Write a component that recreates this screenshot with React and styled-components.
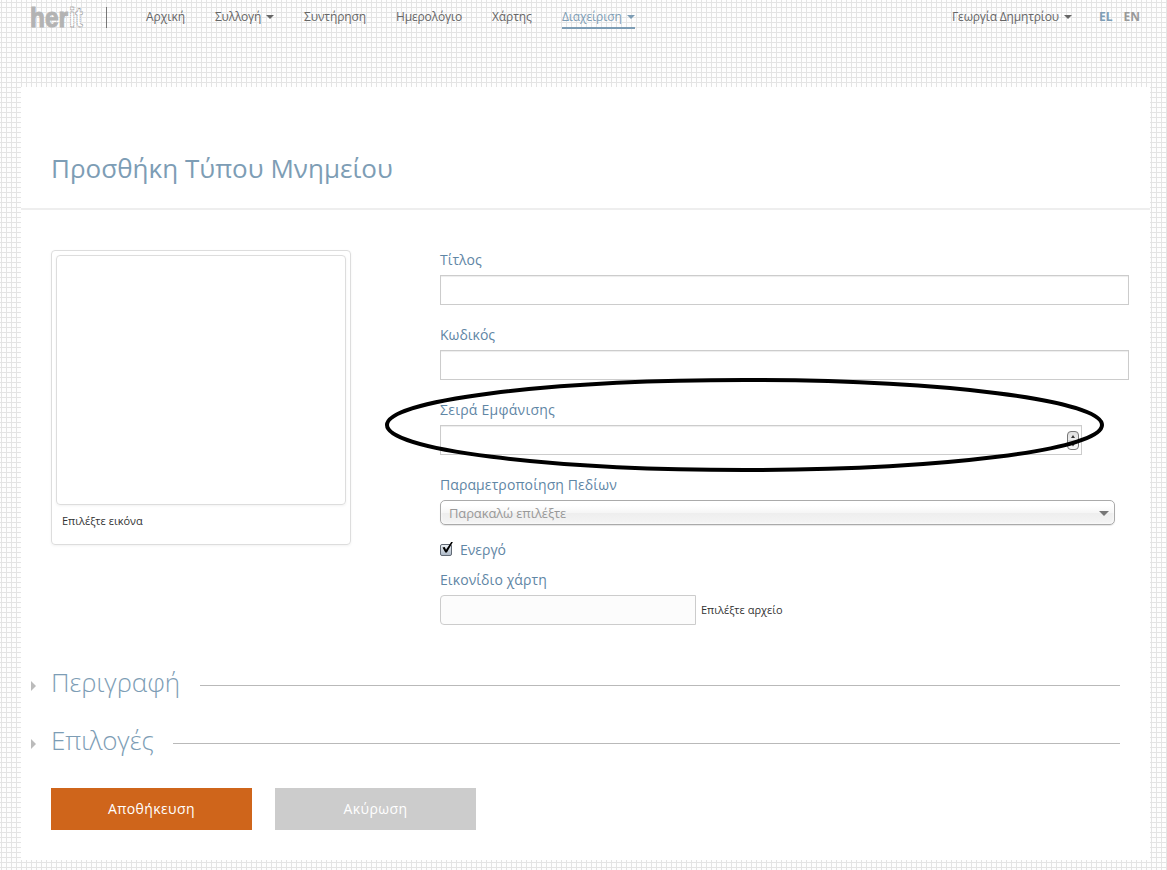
import React from 'react';
import styled, { createGlobalStyle } from 'styled-components';

const GlobalStyle = createGlobalStyle`
  * { box-sizing: border-box; }
  body {
    margin: 0;
    color: #333;
    font-family: "Open Sans", "Noto Sans", sans-serif;
    font-size: 14px;
    line-height: 20px;
    background-color: #fefefe;
    background-image:
      linear-gradient(to right, transparent 1px, #e4e4e4 1px, #e4e4e4 2px, transparent 2px),
      linear-gradient(to bottom, transparent 2px, #e4e4e4 2px, #e4e4e4 3px, transparent 3px);
    background-size: 5px 5px;
  }
`;

const Page = styled.div`
  position: relative;
  width: 1167px;
  height: 870px;
  overflow: hidden;
`;

const Header = styled.header`
  display: flex;
  align-items: flex-start;
  height: 87px;
  padding: 7px 27px 0 30px;
  font-size: 12px;
  color: #666;
`;

const Brand = styled.div`
  width: 77px;
  height: 21px;
  border-right: 1px solid #777;
`;

const LogoDrawing = styled.svg`
  display: block;
  margin-top: -7px;
`;

const Nav = styled.nav`
  display: flex;
  flex: 1;
  gap: 30px;
  padding-left: 39px;
`;

const NavItem = styled.a`
  display: flex;
  align-items: center;
  justify-content: space-between;
  width: ${(p) => p.$width}px;
  height: 22px;
  white-space: nowrap;
  color: ${(p) => (p.$active ? '#7d9db5' : '#666')};
  border-bottom: 2px solid ${(p) => (p.$active ? '#7d9db5' : 'transparent')};
  letter-spacing: ${(p) => p.$track || 0}px;
`;

const Caret = styled.i`
  border: 4px solid transparent;
  border-top-color: currentColor;
  border-bottom: 0;
`;

const Languages = styled.div`
  display: flex;
  gap: 11px;
  margin-left: 27px;
  font-weight: 700;
`;

const Language = styled.a`
  color: ${(p) => (p.$active ? '#7d9db5' : '#999')};
`;

const Panel = styled.main`
  width: 1129px;
  height: 773px;
  margin-left: 21px;
  background: #fff;
`;

const TitleBar = styled.div`
  height: 123px;
  padding: 61px 30px 0;
  border-bottom: 2px solid #eee;
`;

const Title = styled.h1`
  margin: 0;
  font-size: 26px;
  font-weight: 400;
  line-height: 40px;
  letter-spacing: 0.02px;
  color: #7d9db5;
`;

const FormRow = styled.div`
  display: flex;
  gap: 89px;
  height: 443px;
  padding: 40px 21px 0 30px;
`;

const ImageCard = styled.div`
  width: 300px;
  height: 295px;
  padding: 4px;
  border: 1px solid #ddd;
  border-radius: 4px;
  box-shadow: 0 1px 3px rgba(0, 0, 0, 0.055);
`;

const ImagePreview = styled.div`
  height: 250px;
  border: 1px solid #ddd;
  border-radius: 4px;
  box-shadow: 0 1px 3px rgba(0, 0, 0, 0.055);
`;

const FileAction = styled.span`
  display: block;
  padding: ${(p) => p.$pad};
  font-size: 11px;
  color: #333;
`;

const Fields = styled.div`
  flex: 1;
`;

const Field = styled.div`
  margin-bottom: ${(p) => p.$gap ?? 20}px;
`;

const Label = styled.label`
  display: block;
  margin-bottom: 5px;
  color: #5f86a5;
  letter-spacing: ${(p) => p.$track || 0}px;
`;

const TextBox = styled.div`
  display: flex;
  align-items: center;
  justify-content: flex-end;
  width: ${(p) => p.$width || 689}px;
  height: 30px;
  padding: 1px 2px 0 0;
  border: 1px solid #ccc;
  box-shadow: inset 0 1px 1px rgba(0, 0, 0, 0.075);
`;

const Select = styled.div`
  display: flex;
  align-items: center;
  justify-content: space-between;
  width: 675px;
  height: 25px;
  padding: 0 5px 0 8px;
  border: 1px solid #aaa;
  border-radius: 5px;
  background: linear-gradient(#fff 20%, #f6f6f6 50%, #eee 52%, #f4f4f4 100%);
  box-shadow: inset 0 0 3px #fff, 0 1px 1px rgba(0, 0, 0, 0.1);
  color: #999;
  font-size: 13px;
  letter-spacing: -0.12px;
`;

const SelectArrow = styled.i`
  margin-top: 2px;
  border: 5px solid transparent;
  border-top-color: #777;
  border-bottom: 0;
`;

const CheckRow = styled.div`
  display: flex;
  gap: 6px;
  height: 20px;
  margin-bottom: 10px;
  color: #5f86a5;
`;

const FileRow = styled.div`
  display: flex;
`;

const FileName = styled.div`
  width: 256px;
  height: 30px;
  border: 1px solid #ccc;
  border-radius: 4px 0 0 4px;
  background: #fcfcfc;
`;

const Section = styled.section`
  display: flex;
  align-items: center;
  height: 58px;
  padding: 0 30px 0 10px;
`;

const SectionArrow = styled.i`
  margin: 8px 15px 0 0;
  border: 5px solid transparent;
  border-left-color: #bbb;
  border-right: 0;
`;

const SectionTitle = styled.h2`
  width: ${(p) => p.$width}px;
  margin: 0 20px 0 0;
  font-size: 26px;
  font-weight: 300;
  line-height: 40px;
  white-space: nowrap;
  color: #7d9db5;
  letter-spacing: -0.05px;
`;

const Rule = styled.div`
  flex: 1;
  height: 1px;
  margin-top: 7px;
  background: #b9b9b9;
`;

const Actions = styled.div`
  display: flex;
  gap: 23px;
  padding: 19px 30px 0;
`;

const Button = styled.button`
  width: 201px;
  height: 42px;
  padding: 0;
  border: 0;
  background: ${(p) => (p.$primary ? '#cf651b' : '#ccc')};
  color: #fff;
  font: 400 14px/20px "Open Sans", sans-serif;
  letter-spacing: 0.4px;
`;

const Highlight = styled.svg`
  position: absolute;
  left: 384px;
  top: 377px;
`;

const LogoText = styled.text`
  font-family: "Liberation Sans", Arial, sans-serif;
  font-weight: 700;
  font-size: 27px;
`;

function Logo() {
  return (
    <LogoDrawing width="60" height="36" viewBox="0 -7 60 36">
      <LogoText x="0" y="20" fill="#b3b3b3" stroke="#b3b3b3" strokeWidth="1" textLength="38" lengthAdjust="spacingAndGlyphs">her</LogoText>
      <LogoText x="39" y="20" fill="#fff" stroke="#999" strokeWidth="0.8" strokeDasharray="1.6 0.5" textLength="14" lengthAdjust="spacingAndGlyphs">it</LogoText>
    </LogoDrawing>
  );
}

function Stepper() {
  return (
    <svg width="12" height="20" viewBox="0 0 12 20">
      <defs>
        <linearGradient id="step" x2="0" y2="1">
          <stop offset="0" stopColor="#ddd" />
          <stop offset=".5" stopColor="#eee" />
          <stop offset="1" stopColor="#f8f8f8" />
        </linearGradient>
      </defs>
      <rect x=".5" y=".5" width="11" height="18" rx="3.5" fill="url(#step)" stroke="#777" />
      <path d="M1 10h10" stroke="#bbb" />
      <path d="M4 7 6 4l2 3zM4 12.500 6 15.500l2-3z" fill="#333" />
    </svg>
  );
}

function CheckBox() {
  return (
    <svg width="14" height="16" viewBox="0 0 14 16">
      <defs>
        <linearGradient id="check" x2="0" y2="1">
          <stop offset="0" stopColor="#eef2f6" />
          <stop offset="1" stopColor="#abb7c6" />
        </linearGradient>
      </defs>
      <rect x=".5" y="4.500" width="11" height="11" rx="1.500" fill="url(#check)" stroke="#626a75" />
      <path d="m2.500 7.600 2.200-.6 1.300 2.800L11.200 2h1.700L6.900 12.500H5.300z" fill="#000" />
    </svg>
  );
}

export default function App() {
  return (
    <Page>
      <GlobalStyle />
      <Header>
        <Brand><Logo /></Brand>
        <Nav>
          <NavItem $width={39}>Αρχική</NavItem>
          <NavItem $width={59} $track={-0.22}>Συλλογή<Caret /></NavItem>
          <NavItem $width={62} $track={-0.1}>Συντήρηση</NavItem>
          <NavItem $width={66} $track={-0.15}>Ημερολόγιο</NavItem>
          <NavItem $width={40} $track={-0.1}>Χάρτης</NavItem>
          <NavItem $width={73} $track={-0.1} $active>Διαχείριση<Caret /></NavItem>
        </Nav>
        <NavItem $width={120} $track={-0.17}>Γεωργία Δημητρίου<Caret /></NavItem>
        <Languages>
          <Language $active>EL</Language>
          <Language>EN</Language>
        </Languages>
      </Header>
      <Panel>
        <TitleBar><Title>Προσθήκη Τύπου Μνημείου</Title></TitleBar>
        <FormRow>
          <ImageCard>
            <ImagePreview />
            <FileAction $pad="6px 6px">Επιλέξτε εικόνα</FileAction>
          </ImageCard>
          <Fields>
            <Field><Label>Τίτλος</Label><TextBox /></Field>
            <Field><Label>Κωδικός</Label><TextBox /></Field>
            <Field><Label $track={0.26}>Σειρά Εμφάνισης</Label><TextBox $width={642}><Stepper /></TextBox></Field>
            <Field $gap={15}>
              <Label $track={0.1}>Παραμετροποίηση Πεδίων</Label>
              <Select>Παρακαλώ επιλέξτε<SelectArrow /></Select>
            </Field>
            <CheckRow><CheckBox />Ενεργό</CheckRow>
            <Field>
              <Label $track={0.08}>Εικονίδιο χάρτη</Label>
              <FileRow><FileName /><FileAction $pad="5px 5px">Επιλέξτε αρχείο</FileAction></FileRow>
            </Field>
          </Fields>
        </FormRow>
        <Section><SectionArrow /><SectionTitle $width={129}>Περιγραφή</SectionTitle><Rule /></Section>
        <Section><SectionArrow /><SectionTitle $width={102}>Επιλογές</SectionTitle><Rule /></Section>
        <Actions>
          <Button $primary>Αποθήκευση</Button>
          <Button>Ακύρωση</Button>
        </Actions>
      </Panel>
      <Highlight width="722" height="97" viewBox="0 0 722 97">
        <ellipse cx="360.5" cy="48" rx="357.5" ry="45" fill="none" stroke="#000" strokeWidth="4" />
      </Highlight>
    </Page>
  );
}
